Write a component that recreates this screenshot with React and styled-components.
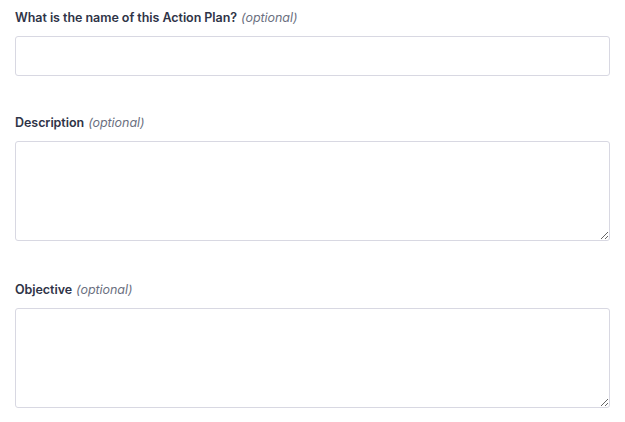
import React from "react";
import styled, { createGlobalStyle } from "styled-components";

const GlobalStyle = createGlobalStyle`
  html, body {
    margin: 0;
    padding: 0;
    background: #fff;
    overflow: hidden;
  }
  body {
    font-family: Inter, "Liberation Sans", sans-serif;
    -webkit-font-smoothing: antialiased;
  }
`;

const Form = styled.form`
  display: flex;
  flex-direction: column;
  padding: 8px 15px 0;
`;

const FieldGroup = styled.div`
  display: flex;
  flex-direction: column;
  margin-bottom: ${(p) => p.gap || 0}px;
`;

const Label = styled.label`
  display: block;
  font-size: 12.5px;
  line-height: 20px;
  font-weight: 600;
  letter-spacing: -0.05px;
  color: #2f3447;
  margin-bottom: 8px;
`;

const Optional = styled.em`
  font-style: italic;
  font-weight: 400;
  color: #6b6f80;
  margin-left: 4px;
`;

const TextInput = styled.input`
  box-sizing: border-box;
  display: block;
  width: 100%;
  height: 40px;
  margin: 0;
  padding: 8px 12px;
  border: 1px solid #d8d8e2;
  border-radius: 3px;
  font: inherit;
  font-size: 14px;
  color: #2f3447;
  background: #fff;
  outline: none;
`;

const TextArea = styled.textarea`
  box-sizing: border-box;
  display: block;
  width: 100%;
  height: 100px;
  margin: 0;
  padding: 8px 12px;
  border: 1px solid #d8d8e2;
  border-radius: 3px;
  font: inherit;
  font-size: 14px;
  color: #2f3447;
  background: #fff;
  outline: none;
  resize: vertical;
`;

const fields = [
  { id: "name", label: "What is the name of this Action Plan?", kind: "input", gap: 37 },
  { id: "description", label: "Description", kind: "textarea", gap: 39 },
  { id: "objective", label: "Objective", kind: "textarea", gap: 0 },
];

export default function App() {
  return (
    <>
      <GlobalStyle />
      <Form onSubmit={(e) => e.preventDefault()}>
        {fields.map((f) => (
          <FieldGroup key={f.id} gap={f.gap}>
            <Label htmlFor={f.id}>
              {f.label}
              <Optional>(optional)</Optional>
            </Label>
            {f.kind === "input" ? (
              <TextInput id={f.id} type="text" />
            ) : (
              <TextArea id={f.id} />
            )}
          </FieldGroup>
        ))}
      </Form>
    </>
  );
}
